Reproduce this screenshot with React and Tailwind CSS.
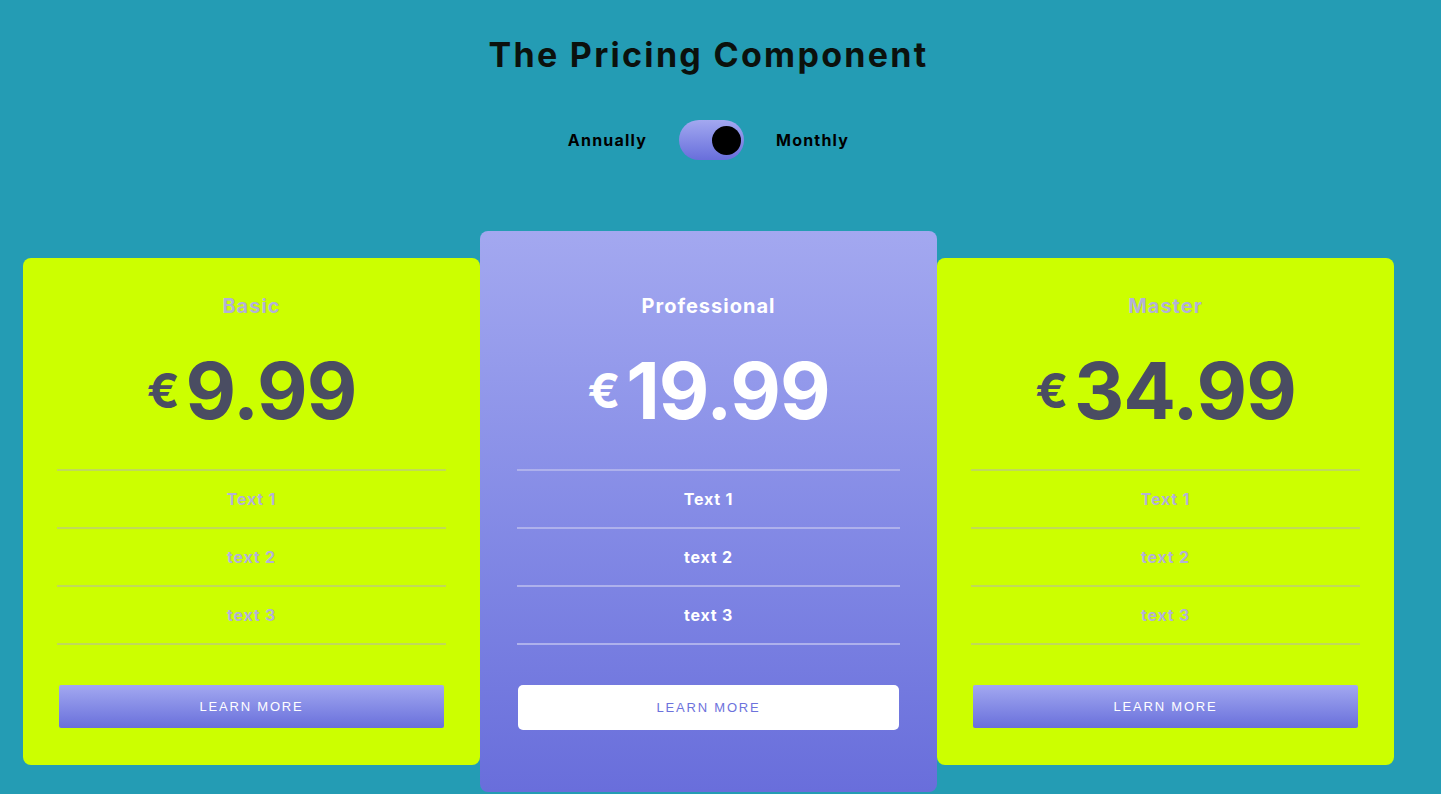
const plans = [
  { name: "Basic", price: "9.99", featured: false },
  { name: "Professional", price: "19.99", featured: true },
  { name: "Master", price: "34.99", featured: false },
];

const features = ["Text 1", "text 2", "text 3"];

const PlanCard = ({ plan }) => {
  const f = plan.featured;
  return (
    <div
      className={
        f
          ? "w-[457px] h-[561px] rounded-lg bg-gradient-to-b from-[#a3a8f0] to-[#696edb] px-[37px] pt-[63px] flex flex-col"
          : "w-[457px] h-[507px] rounded-lg bg-[#ccff00] px-[34px] pt-[36px] flex flex-col"
      }
    >
      <h2
        className={`h-[24px] text-[20px] leading-[24px] font-bold text-center tracking-[1px] ${
          f ? "text-white" : "text-[#b3b1d6]"
        }`}
      >
        {plan.name}
      </h2>
      <div
        className={`h-[151px] pb-[6px] flex items-center justify-center gap-[6px] ${
          f ? "text-white" : "text-[#4a4d62]"
        }`}
      >
        <span className="text-[48px] leading-none font-bold">€</span>
        <span className="text-[78px] leading-none font-bold tracking-[-1px]">
          {plan.price}
        </span>
      </div>
      <ul
        className={`border-t-2 ${
          f ? "border-[#aeb1ec]" : "border-[#c0d95a]"
        }`}
      >
        {features.map((t) => (
          <li
            key={t}
            className={`h-[58px] border-b-2 flex items-center justify-center text-[16px] font-bold tracking-[0.8px] ${
              f ? "border-[#aeb1ec] text-white" : "border-[#c0d95a] text-[#b3b1d6]"
            }`}
          >
            {t}
          </li>
        ))}
      </ul>
      <button
        type="button"
        className={
          f
            ? "mt-[40px] mx-[1px] h-[45px] rounded-[5px] bg-white text-[#6d72dc] text-[13px] tracking-[1.8px] uppercase font-['Liberation_Sans',sans-serif]"
            : "mt-[40px] mx-[2px] h-[43px] rounded-[2px] bg-gradient-to-b from-[#a3a8f0] to-[#6a6fdb] text-white text-[13px] tracking-[1.8px] uppercase font-['Liberation_Sans',sans-serif]"
        }
      >
        Learn More
      </button>
    </div>
  );
};

const App = () => {
  return (
    <div className="w-full min-h-screen bg-[#249cb4] font-['Inter',sans-serif]">
      <div className="w-[1417px] flex flex-col items-center">
        <h1 className="mt-[35px] h-[40px] text-[34px] leading-[40px] font-bold text-[#0b110d] tracking-[2.3px]">
          The Pricing Component
        </h1>
        <div className="mt-[45px] flex items-center gap-[32px] text-[16px] font-bold text-black tracking-[1.2px]">
          <span>Annually</span>
          <div className="w-[65px] h-[40px] rounded-full bg-gradient-to-b from-[#a3a8f0] to-[#696edb] flex items-center justify-end pr-[3px]">
            <div className="w-[29px] h-[29px] rounded-full bg-black" />
          </div>
          <span>Monthly</span>
        </div>
        <div className="mt-[71px] flex items-center">
          {plans.map((p) => (
            <PlanCard key={p.name} plan={p} />
          ))}
        </div>
      </div>
    </div>
  );
};

export default App;
